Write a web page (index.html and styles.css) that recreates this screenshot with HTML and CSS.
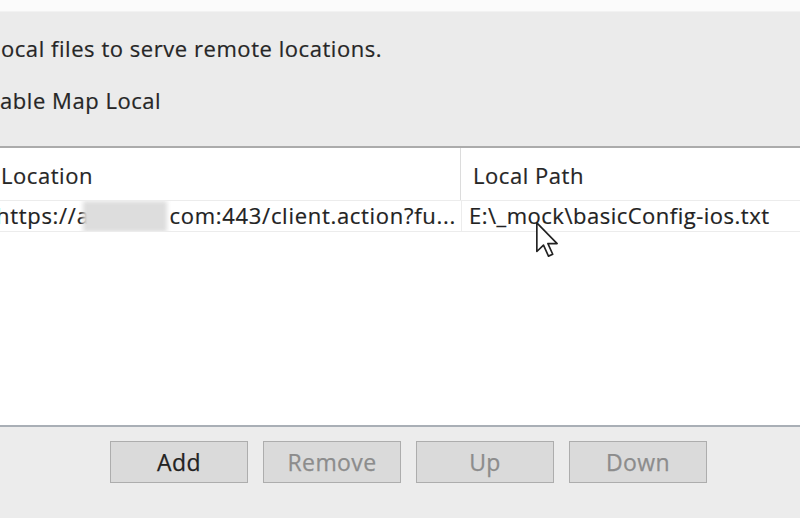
FILE: index.html
```html
<!DOCTYPE html>
<html>
<head>
<meta charset="utf-8">
<link rel="stylesheet" href="styles.css">
</head>
<body>
<div class="window">
  <div class="topstrip"></div>
  <div class="panel">
    <p class="desc"><span class="pre"><span class="ltr">Map Local allows you to use l</span></span>ocal files to serve remote locations.</p>
    <p class="enable"><span class="pre"><span class="ltr">☑ En</span></span>able Map Local</p>
  </div>
  <div class="table">
    <div class="thead">
      <div class="col col-loc">Location</div>
      <div class="col col-path">Local Path</div>
    </div>
    <div class="trow">
      <div class="cell cell-loc"><span class="url">https://a<span class="blur"></span>com:443/client.action?fu...</span></div>
      <div class="cell cell-path">E:\_mock\basicConfig-ios.txt</div>
    </div>
    <svg class="cursor" width="24" height="37" viewBox="0 0 13 20">
      <path d="M1 1 L1 16.5 L4.6 13 L7.3 19 L9.6 18 L7 12.2 L12 12.2 Z" fill="#fff" stroke="#222" stroke-width="0.9" stroke-linejoin="round"/>
    </svg>
  </div>
  <div class="bottom">
    <button class="btn">Add</button>
    <button class="btn dis">Remove</button>
    <button class="btn dis">Up</button>
    <button class="btn dis">Down</button>
  </div>
</div>
</body>
</html>
```
FILE: styles.css
```css
html, body {
  margin: 0;
  padding: 0;
}
body {
  width: 800px;
  height: 518px;
  overflow: hidden;
  background: #fff;
  font-family: "Open Sans", "Noto Sans", sans-serif;
  color: #262626;
  -webkit-text-stroke: 0.2px currentColor;
}
.window {
  display: flex;
  flex-direction: column;
  width: 800px;
  height: 518px;
}
.topstrip {
  height: 11px;
  background: #fbfbfb;
  border-bottom: 1px solid #f2f2f2;
}
.panel {
  height: 134px;
  background: #ebebeb;
  border-bottom: 2px solid #ababab;
  box-shadow: 0 1px 0 #d6d6d6;
  white-space: nowrap;
}
.desc, .enable {
  margin: 0;
  font-size: 22px;
  line-height: 28px;
  letter-spacing: 0.55px;
  color: #262626;
}
.desc {
  margin-top: 22px;
  padding-left: 1px;
}
.enable {
  margin-top: 24px;
}
.pre {
  display: inline-block;
  width: 0;
  direction: rtl;
  white-space: nowrap;
  color: transparent;
  -webkit-text-stroke: 0;
}
.ltr {
  display: inline-block;
  direction: ltr;
}
.table {
  position: relative;
  height: 277px;
  background: #fff;
}
.thead {
  display: flex;
  height: 52px;
}
.col {
  font-size: 22px;
  line-height: 30px;
  letter-spacing: 0.55px;
  color: #262626;
  padding-top: 12px;
  box-sizing: border-box;
}
.col-loc {
  width: 461px;
  padding-left: 1px;
  border-right: 1px solid #dcdcdc;
}
.col-path {
  padding-left: 12px;
}
.trow {
  display: flex;
  height: 30px;
  border-top: 1px solid #ececec;
  border-bottom: 1px solid #ececec;
  white-space: nowrap;
}
.cell {
  font-size: 22px;
  line-height: 29px;
  letter-spacing: 0.5px;
  color: #222;
  box-sizing: border-box;
  overflow: hidden;
}
.cell-loc {
  width: 462px;
  letter-spacing: 0.7px;
  border-right: 1px solid #ececec;
}
.url {
  margin-left: -4px;
}
.cell-path {
  padding-left: 7px;
}
.blur {
  display: inline-block;
  width: 84px;
  height: 31px;
  margin-left: -7px;
  margin-right: 3px;
  vertical-align: -8px;
  background: #dddddd;
  filter: blur(2px);
}
.cursor {
  position: absolute;
  left: 535px;
  top: 73px;
}
.bottom {
  flex: 1;
  background: #ececec;
  border-top: 2px solid #a9afb6;
  display: flex;
  gap: 15px;
  padding: 14px 0 0 110px;
  align-items: flex-start;
}
.btn {
  width: 138px;
  height: 42px;
  background: #dadada;
  border: 1px solid #adadad;
  font-family: "Open Sans", "Noto Sans", sans-serif;
  font-size: 23px;
  letter-spacing: 0.4px;
  color: #222;
  -webkit-text-stroke: 0.25px currentColor;
  padding: 0;
  margin: 0;
}
.btn.dis {
  color: #8c8c8c;
}
```
